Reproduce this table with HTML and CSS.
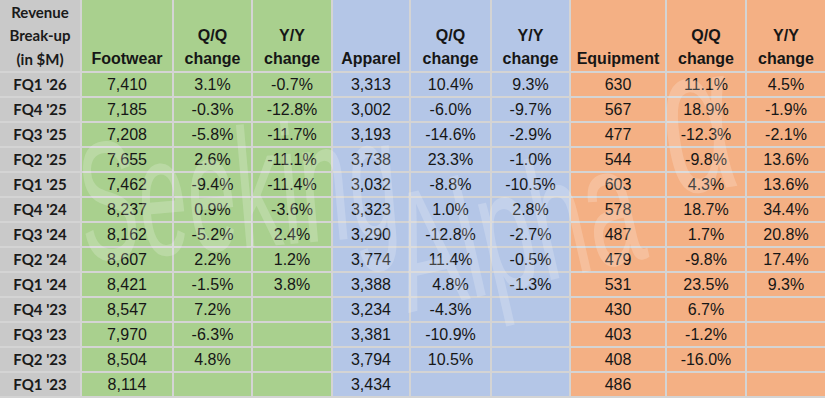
FILE: index.html
```html
<!DOCTYPE html>
<html>
<head>
<meta charset="utf-8">
<link rel="stylesheet" href="styles.css">
</head>
<body>
<div class="sheet">
  <div class="grid">
    <div class="c lbl hd">Revenue<br>Break-up<br>(in $M)</div>
    <div class="c g hd">Footwear</div>
    <div class="c g hd">Q/Q<br>change</div>
    <div class="c g hd">Y/Y<br>change</div>
    <div class="c b hd">Apparel</div>
    <div class="c b hd">Q/Q<br>change</div>
    <div class="c b hd">Y/Y<br>change</div>
    <div class="c o hd">Equipment</div>
    <div class="c o hd">Q/Q<br>change</div>
    <div class="c o hd">Y/Y<br>change</div>

    <div class="c lbl">FQ1 '26</div><div class="c g">7,410</div><div class="c g">3.1%</div><div class="c g">-0.7%</div><div class="c b">3,313</div><div class="c b">10.4%</div><div class="c b">9.3%</div><div class="c o">630</div><div class="c o">11.1%</div><div class="c o">4.5%</div>
    <div class="c lbl">FQ4 '25</div><div class="c g">7,185</div><div class="c g">-0.3%</div><div class="c g">-12.8%</div><div class="c b">3,002</div><div class="c b">-6.0%</div><div class="c b">-9.7%</div><div class="c o">567</div><div class="c o">18.9%</div><div class="c o">-1.9%</div>
    <div class="c lbl">FQ3 '25</div><div class="c g">7,208</div><div class="c g">-5.8%</div><div class="c g">-11.7%</div><div class="c b">3,193</div><div class="c b">-14.6%</div><div class="c b">-2.9%</div><div class="c o">477</div><div class="c o">-12.3%</div><div class="c o">-2.1%</div>
    <div class="c lbl">FQ2 '25</div><div class="c g">7,655</div><div class="c g">2.6%</div><div class="c g">-11.1%</div><div class="c b">3,738</div><div class="c b">23.3%</div><div class="c b">-1.0%</div><div class="c o">544</div><div class="c o">-9.8%</div><div class="c o">13.6%</div>
    <div class="c lbl">FQ1 '25</div><div class="c g">7,462</div><div class="c g">-9.4%</div><div class="c g">-11.4%</div><div class="c b">3,032</div><div class="c b">-8.8%</div><div class="c b">-10.5%</div><div class="c o">603</div><div class="c o">4.3%</div><div class="c o">13.6%</div>
    <div class="c lbl">FQ4 '24</div><div class="c g">8,237</div><div class="c g">0.9%</div><div class="c g">-3.6%</div><div class="c b">3,323</div><div class="c b">1.0%</div><div class="c b">2.8%</div><div class="c o">578</div><div class="c o">18.7%</div><div class="c o">34.4%</div>
    <div class="c lbl">FQ3 '24</div><div class="c g">8,162</div><div class="c g">-5.2%</div><div class="c g">2.4%</div><div class="c b">3,290</div><div class="c b">-12.8%</div><div class="c b">-2.7%</div><div class="c o">487</div><div class="c o">1.7%</div><div class="c o">20.8%</div>
    <div class="c lbl">FQ2 '24</div><div class="c g">8,607</div><div class="c g">2.2%</div><div class="c g">1.2%</div><div class="c b">3,774</div><div class="c b">11.4%</div><div class="c b">-0.5%</div><div class="c o">479</div><div class="c o">-9.8%</div><div class="c o">17.4%</div>
    <div class="c lbl">FQ1 '24</div><div class="c g">8,421</div><div class="c g">-1.5%</div><div class="c g">3.8%</div><div class="c b">3,388</div><div class="c b">4.8%</div><div class="c b">-1.3%</div><div class="c o">531</div><div class="c o">23.5%</div><div class="c o">9.3%</div>
    <div class="c lbl">FQ4 '23</div><div class="c g">8,547</div><div class="c g">7.2%</div><div class="c g"></div><div class="c b">3,234</div><div class="c b">-4.3%</div><div class="c b"></div><div class="c o">430</div><div class="c o">6.7%</div><div class="c o"></div>
    <div class="c lbl">FQ3 '23</div><div class="c g">7,970</div><div class="c g">-6.3%</div><div class="c g"></div><div class="c b">3,381</div><div class="c b">-10.9%</div><div class="c b"></div><div class="c o">403</div><div class="c o">-1.2%</div><div class="c o"></div>
    <div class="c lbl">FQ2 '23</div><div class="c g">8,504</div><div class="c g">4.8%</div><div class="c g"></div><div class="c b">3,794</div><div class="c b">10.5%</div><div class="c b"></div><div class="c o">408</div><div class="c o">-16.0%</div><div class="c o"></div>
    <div class="c lbl">FQ1 '23</div><div class="c g">8,114</div><div class="c g"></div><div class="c g"></div><div class="c b">3,434</div><div class="c b"></div><div class="c b"></div><div class="c o">486</div><div class="c o"></div><div class="c o"></div>
  </div>
  <div class="wm wm-seeking">Seeking</div>
  <div class="wm wm-alpha">Alpha</div>
  <div class="wm wm-symbol">α</div>
</div>
</body>
</html>
```

FILE: styles.css
```css
html, body {
  margin: 0;
  padding: 0;
  background: #ffffff;
}
.sheet {
  position: relative;
  width: 825px;
  height: 400px;
  overflow: hidden;
}
.grid {
  display: grid;
  grid-template-columns: 80px 90px 77px 78px 76px 79px 77px 94px 78px 78px;
  grid-template-rows: 71px repeat(13, 23px);
  gap: 2px;
  background: #d4d4d4;
  padding-bottom: 2px;
  font-family: "Liberation Sans", Arial, sans-serif;
  font-size: 16px;
  color: #161616;
}
.c {
  display: flex;
  align-items: center;
  justify-content: center;
  text-align: center;
  white-space: nowrap;
  line-height: 23px;
}
.hd {
  align-items: flex-end;
  font-weight: bold;
  padding-bottom: 1px;
}
.lbl {
  background: #c9c9c9;
  font-family: Lato, "Open Sans", sans-serif;
  font-weight: bold;
  font-size: 15px;
  color: #1a1a1a;
}
.lbl.hd {
  line-height: 23.5px;
  padding-bottom: 0;
}
.g { background: #a9d08e; }
.b { background: #b4c6e7; }
.o { background: #f4b084; }
.wm {
  position: absolute;
  font-family: "Liberation Sans", Arial, sans-serif;
  font-size: 170px;
  line-height: 170px;
  color: rgba(255, 255, 255, 0.2);
  white-space: nowrap;
  pointer-events: none;
  transform-origin: 0 144px;
}
.wm-seeking {
  left: 84px;
  top: 118px;
  transform: rotate(-5deg) scaleX(0.52);
}
.wm-alpha {
  left: 408px;
  top: 169px;
  transform: rotate(-13deg) scaleX(0.57);
}
.wm-symbol {
  left: 646px;
  top: 20px;
  font-size: 210px;
  line-height: 210px;
  transform-origin: 0 0;
  transform: rotate(-8deg) scaleX(0.6);
}
```
